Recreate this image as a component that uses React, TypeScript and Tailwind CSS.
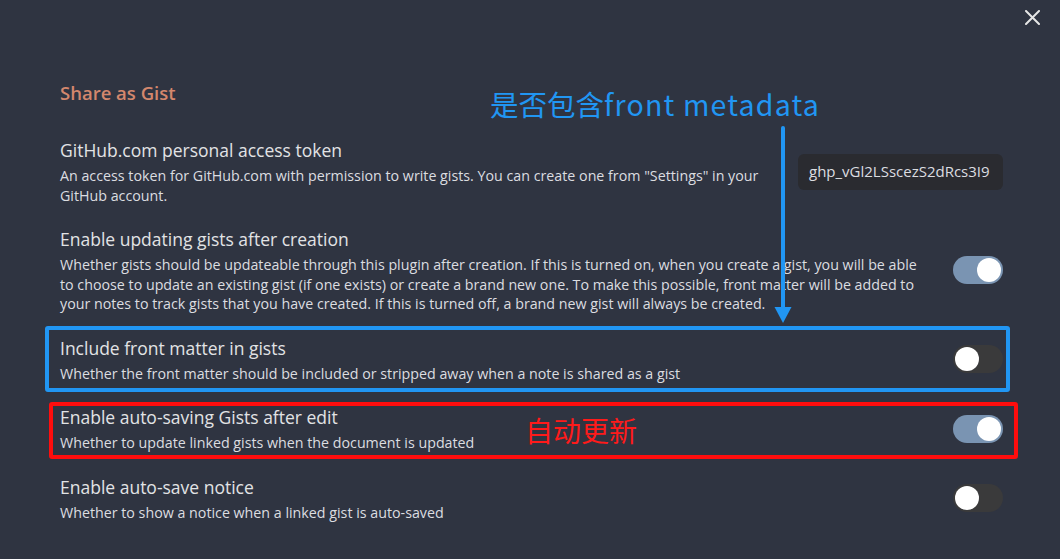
import React from 'react';

const Toggle: React.FC<{ on: boolean }> = ({ on }) => (
  <div
    className={`flex h-[28px] w-[50px] shrink-0 items-center rounded-full px-[2px] ${
      on ? 'justify-end bg-[#7a94b2]' : 'justify-start bg-[#3a3a3b]'
    }`}
  >
    <div className="h-[24px] w-[24px] rounded-full bg-white" />
  </div>
);

const SettingRow: React.FC<{
  name: string;
  lines: string[];
  control: React.ReactNode;
  children?: React.ReactNode;
}> = ({ name, lines, control, children }) => (
  <div className="relative flex items-center justify-between py-[11px]">
    <div className="flex flex-col">
      <div className="text-[17.5px] leading-[24px] text-[#e2e3e5]">{name}</div>
      <div className="mt-[4px] text-[14.25px] leading-[19.5px] text-[#dcdde0]">
        {lines.map((l, i) => (
          <div key={i} className="whitespace-nowrap">
            {l}
          </div>
        ))}
      </div>
    </div>
    {control}
    {children}
  </div>
);

export default function App() {
  return (
    <div
      className="relative h-[559px] w-[1060px] overflow-hidden bg-[#2f3441]"
      style={{ fontFamily: '"Open Sans", "Noto Sans", sans-serif' }}
    >
      {/* close */}
      <svg className="absolute left-[1025px] top-[10px]" width="15" height="15" viewBox="0 0 15 15">
        <path d="M1 1L14 14M14 1L1 14" stroke="#e6e6e6" strokeWidth="2" strokeLinecap="round" />
      </svg>

      <div className="px-[60px] pr-[57px] pt-[81px]">
        <div className="text-[18.5px] font-semibold leading-[24px] text-[#d4876d]">Share as Gist</div>

        <div className="mt-[22px]">
          <SettingRow
            name="GitHub.com personal access token"
            lines={[
              'An access token for GitHub.com with permission to write gists. You can create one from "Settings" in your',
              'GitHub account.',
            ]}
            control={
              <div className="flex h-[36px] w-[205px] items-center rounded-[6px] bg-[#2a2b30] px-[11px] text-[15px] text-[#dcdde0]">
                ghp_vGl2LSscezS2dRcs3I9
              </div>
            }
          />
          <SettingRow
            name="Enable updating gists after creation"
            lines={[
              'Whether gists should be updateable through this plugin after creation. If this is turned on, when you create a gist, you will be able',
              'to choose to update an existing gist (if one exists) or create a brand new one. To make this possible, front matter will be added to',
              'your notes to track gists that you have created. If this is turned off, a brand new gist will always be created.',
            ]}
            control={<Toggle on />}
          />
          <SettingRow
            name="Include front matter in gists"
            lines={['Whether the front matter should be included or stripped away when a note is shared as a gist']}
            control={<Toggle on={false} />}
          >
            <div className="pointer-events-none absolute bottom-[2px] left-[-15px] right-[-7px] top-[1px] rounded-[3px] border-[4px] border-[#2196f3]" />
          </SettingRow>
          <SettingRow
            name="Enable auto-saving Gists after edit"
            lines={['Whether to update linked gists when the document is updated']}
            control={<Toggle on />}
          >
            <div className="pointer-events-none absolute bottom-[5px] left-[-11px] right-[-15px] top-[8px] rounded-[3px] border-[4px] border-[#ff0d0d]" />
            <div
              className="absolute left-[465px] top-[20px] text-[28px] leading-[32px] text-[#ff1a1a]"
              style={{ fontFamily: '"Noto Sans CJK SC", sans-serif' }}
            >
              自动更新
            </div>
          </SettingRow>
          <SettingRow
            name="Enable auto-save notice"
            lines={['Whether to show a notice when a linked gist is auto-saved']}
            control={<Toggle on={false} />}
          />
        </div>
      </div>

      {/* annotation */}
      <div
        className="absolute left-[490px] top-[86px] text-[28.5px] leading-[36px] text-[#2196f3]"
        style={{ fontFamily: '"Noto Sans CJK SC", sans-serif' }}
      >
        是否包含<span className="tracking-[1.2px]">front metadata</span>
      </div>
      <svg className="absolute left-[770px] top-[124px]" width="26" height="202" viewBox="0 0 26 202">
        <path d="M13 4V186" stroke="#2196f3" strokeWidth="4" strokeLinecap="round" />
        <path d="M4.5 183L21.5 183L13 199Z" fill="#2196f3" />
      </svg>
    </div>
  );
}
